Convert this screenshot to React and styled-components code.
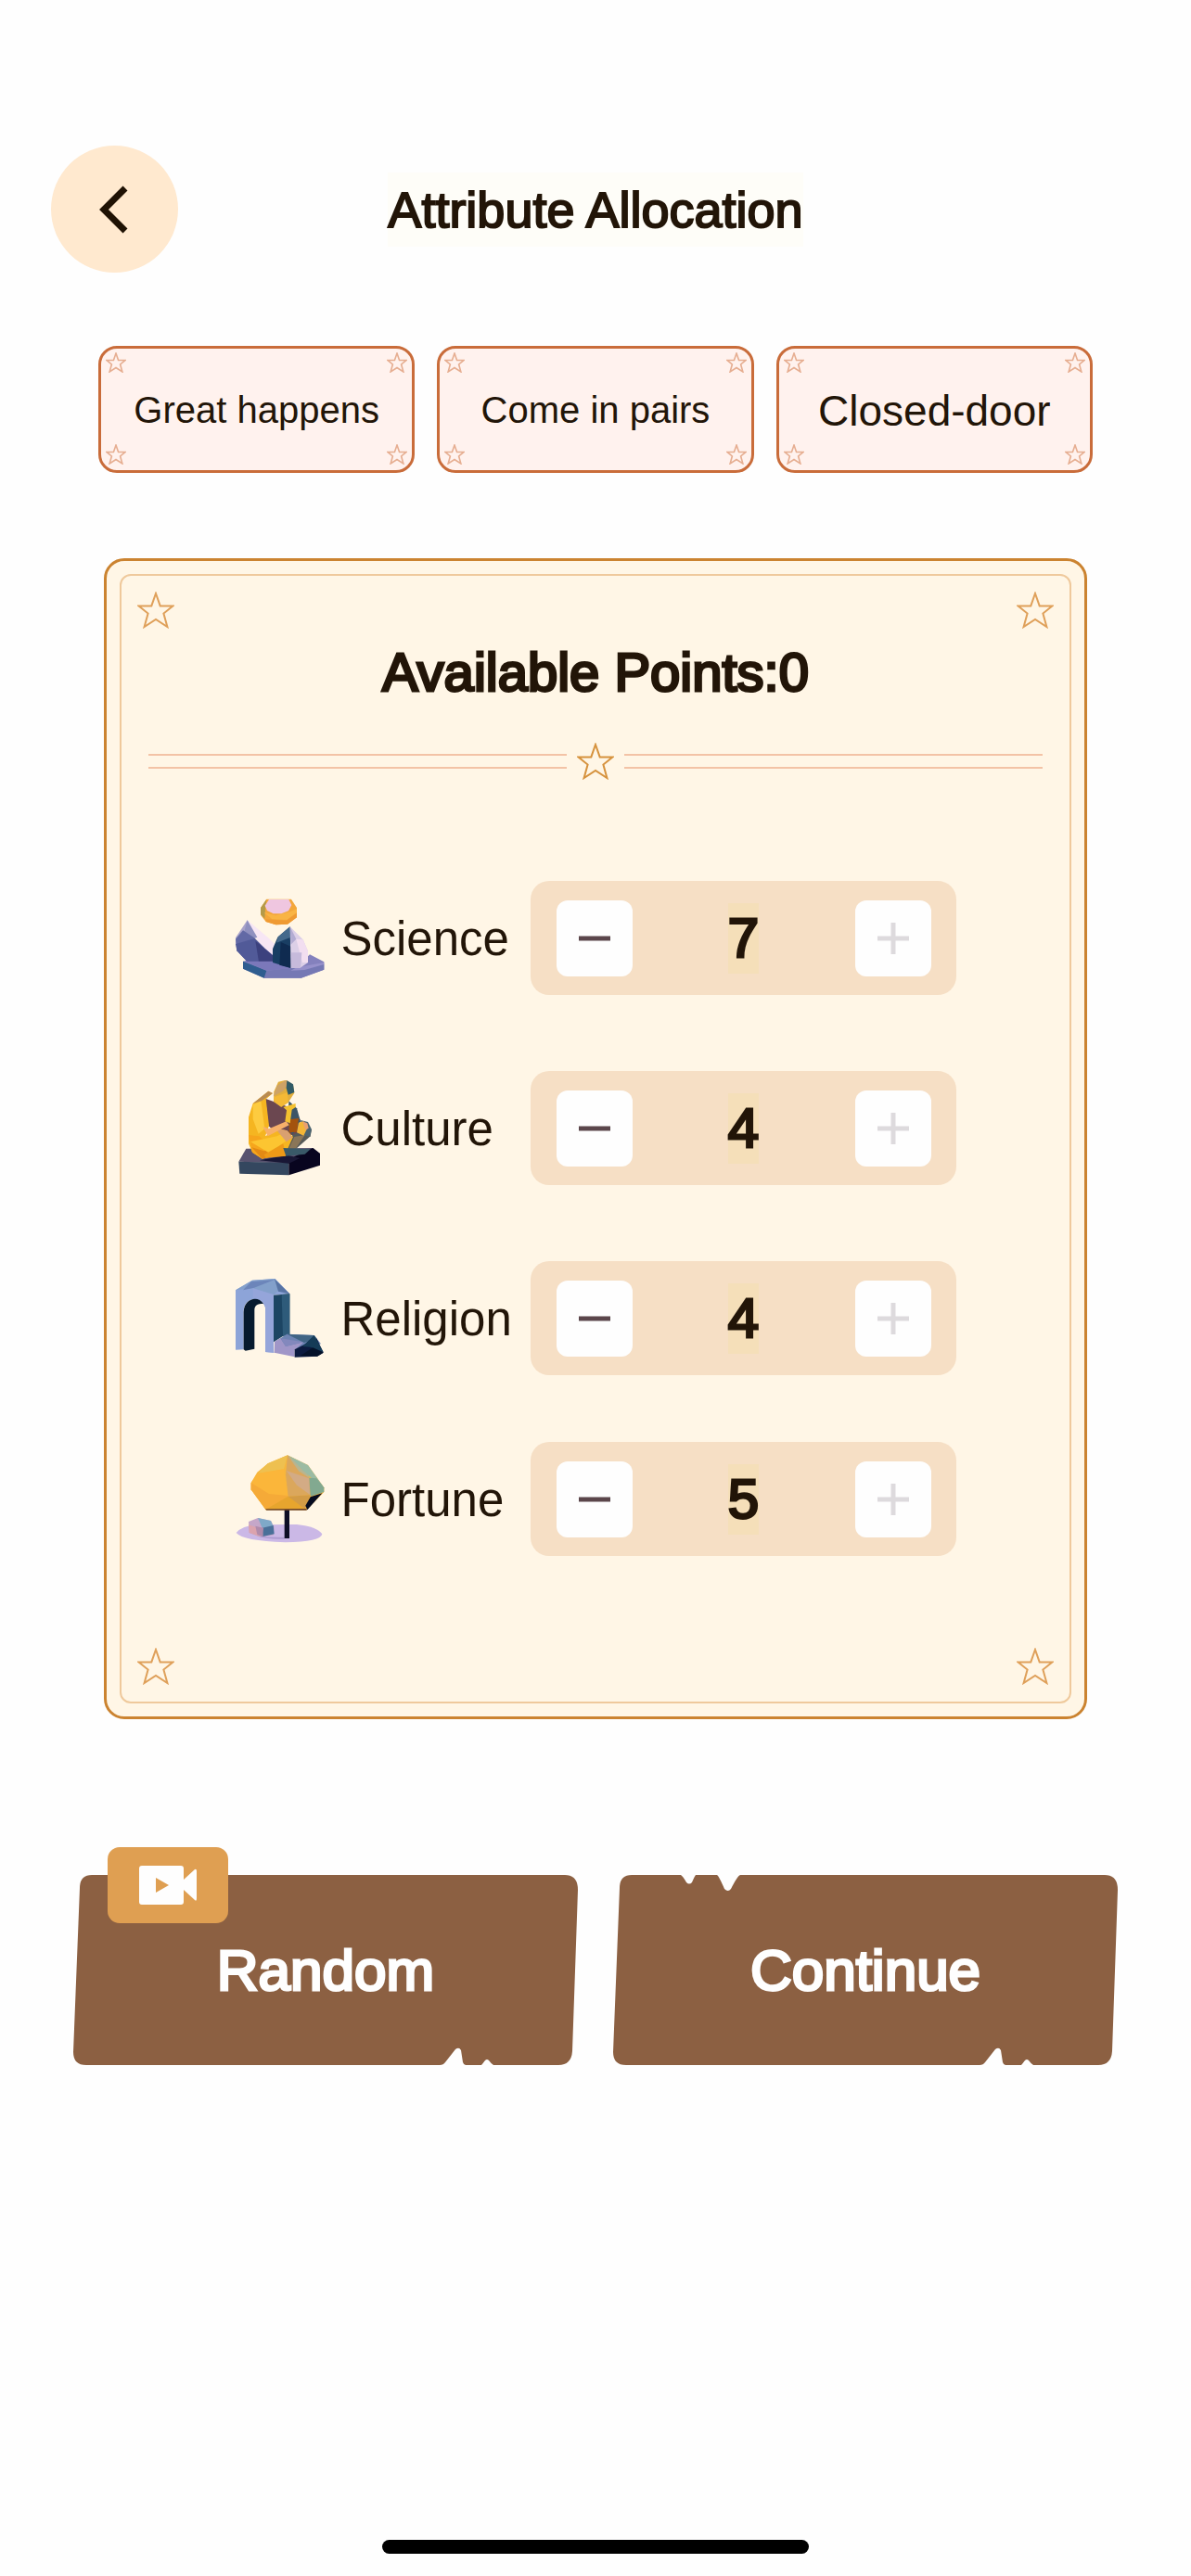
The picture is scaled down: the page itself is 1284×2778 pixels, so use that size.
import React, { useState } from "react";
import styled, { createGlobalStyle } from "styled-components";

const GlobalStyle = createGlobalStyle`
  *, *::before, *::after { box-sizing: border-box; }
  body {
    margin: 0;
    background: #fefefe;
    color: #221508;
    font-family: "Liberation Sans", Arial, Helvetica, sans-serif;
  }
  button { font: inherit; color: inherit; border: 0; padding: 0; cursor: pointer; }
  button:disabled { cursor: default; }
`;

const Page = styled.main`
  min-height: 100vh;
  display: flex;
  flex-direction: column;
  padding: 157px 0 24px;
`;

const Header = styled.header`
  display: grid;
  grid-template-columns: 1fr auto 1fr;
  align-items: center;
  padding: 0 55px;
`;

const BackButton = styled.button`
  width: 137px;
  height: 137px;
  display: grid;
  place-items: center;
  border-radius: 50%;
  background: #ffe9cf;
`;

const Title = styled.h1`
  margin: 0;
  background: #fefdf8;
  font-size: 54px;
  line-height: 80px;
  font-weight: 400;
  -webkit-text-stroke: 2px currentColor;
`;

const Tags = styled.ul`
  display: grid;
  grid-template-columns: repeat(3, 1fr);
  gap: 24px;
  margin: 79px 0 0;
  padding: 0 106px;
  list-style: none;
`;

const Tag = styled.li`
  position: relative;
  height: 137px;
  display: grid;
  place-items: center;
  padding-top: 2px;
  border: 3px solid #c96c3a;
  border-radius: 20px;
  background: #fff2ee;
  font-size: ${(p) => (p.$large ? 46 : 40)}px;
  white-space: nowrap;
`;

const CornerStar = styled.svg`
  position: absolute;
  width: ${(p) => p.$size}px;
  height: ${(p) => p.$size}px;
  ${(p) => p.$v}: ${(p) => p.$insetY}px;
  ${(p) => p.$h}: ${(p) => p.$insetX}px;
`;

const Panel = styled.section`
  position: relative;
  margin: 92px 112px 0;
  padding: 84px 0 173px;
  border: 3px solid #cb8330;
  border-radius: 22px;
  background: #fff6e6;

  &::before {
    content: "";
    position: absolute;
    inset: 14px;
    border: 2px solid #efc99c;
    border-radius: 12px;
    pointer-events: none;
  }
`;

const PointsHeading = styled.h2`
  margin: 0;
  text-align: center;
  font-size: 58px;
  line-height: 72px;
  font-weight: 400;
  -webkit-text-stroke: 3px currentColor;
`;

const Divider = styled.div`
  display: flex;
  align-items: center;
  gap: 11px;
  margin-top: 40px;
  padding: 0 45px;
`;

const DoubleLine = styled.span`
  flex: 1;
  height: 16px;
  border: solid #f3c3a6;
  border-width: 2px 0;
`;

const DividerStar = styled.svg`
  width: 40px;
  height: 40px;
`;

const Attributes = styled.ul`
  margin: 109px 0 0;
  padding: 0;
  list-style: none;
`;

const AttributeRow = styled.li`
  display: flex;
  align-items: center;
  justify-content: center;

  & + & { margin-top: 82px; }
  & + &:last-child { margin-top: 72px; }
`;

const Art = styled.svg`
  width: 96px;
  height: 104px;
`;

const AttributeName = styled.span`
  width: 222px;
  padding: 2px 0 0 18px;
  font-size: 51px;
  line-height: 60px;
`;

const Stepper = styled.div`
  width: 459px;
  height: 123px;
  display: flex;
  align-items: center;
  justify-content: space-between;
  padding: 0 27px 0 28px;
  border-radius: 20px;
  background: #f6dfc5;
`;

const StepButton = styled.button`
  width: 82px;
  height: 82px;
  display: grid;
  place-items: center;
  border-radius: 12px;
  background: #fefefe;
  color: #5b464b;

  &:disabled { color: #dddadd; }
`;

const Value = styled.output`
  background: #f5dfb9;
  font-size: 60px;
  line-height: 76px;
  -webkit-text-stroke: 3px currentColor;
`;

const Actions = styled.div`
  display: grid;
  grid-template-columns: 1fr 1fr;
  gap: 38px;
  margin-top: 168px;
  padding: 0 79px;
`;

const ActionButton = styled.button`
  position: relative;
  height: 205px;
  background: none;
  color: #fefefe;
  font-size: 62px;
  -webkit-text-stroke: 3px currentColor;
`;

const Plate = styled.svg`
  position: absolute;
  inset: 0;
  width: 100%;
  height: 100%;
`;

const ActionLabel = styled.span`
  position: relative;
`;

const AdBadge = styled.span`
  position: absolute;
  top: -30px;
  left: 37px;
  width: 130px;
  height: 82px;
  display: grid;
  place-items: center;
  border-radius: 13px;
  background: #df9f52;
`;

const HomeIndicator = styled.div`
  width: 460px;
  height: 15px;
  margin: auto auto 0;
  border-radius: 8px;
  background: #000;
`;

const STAR = "M20 2 L24.7 15.4 H38.4 L28.4 23.6 L32.4 38 L20 30 L7.6 38 L11.6 23.6 L1.6 15.4 H15.3 Z";

function StarPath({ color, width }) {
  return <path d={STAR} fill="none" stroke={color} strokeWidth={width} />;
}

function CornerStars({ size, x, top, bottom, color, width }) {
  return [["top", top], ["bottom", bottom]].flatMap(([v, y]) =>
    ["left", "right"].map((h) => (
      <CornerStar key={v + h} viewBox="0 0 40 40" aria-hidden="true" $size={size} $v={v} $h={h} $insetX={x} $insetY={y}>
        <StarPath color={color} width={width} />
      </CornerStar>
    ))
  );
}

function ScienceArt() {
  return (
    <Art viewBox="42 88 288 312" aria-hidden="true">
      <path fill="#8481bd" d="M66 318 L160 296 L262 316 L282 296 L328 320 V345 L254 372 H134 L66 342Z" />
      <path fill="#7578b4" d="M134 350 L328 328 V345 L254 372 H134Z" />
      <path fill="#9791cb" d="M240 338 L328 322 V328 L265 346 L220 348Z" />
      <path fill="#2f5d8f" d="M66 318 L142 348 L134 372 L66 342Z" />
      <path fill="#f7e6f4" d="M80 185 L150 244 L168 262 V300 H146 L100 230Z" />
      <path fill="#a8a2c9" d="M80 185 L95 236 L42 266 V242Z" />
      <path fill="#8f90bf" d="M80 185 L112 240 L88 250 L70 222Z" />
      <path fill="#6269a5" d="M42 246 L66 218 L100 240 L130 270 L162 298 L158 322 H82 L46 284Z" />
      <path fill="#515a98" d="M46 284 L42 262 L104 244 L134 274 L120 322 H82Z" />
      <path fill="#3c417e" d="M106 252 L164 300 L162 326 H118Z" />
      <path fill="#7b78ba" d="M72 318 H166 L220 340 L142 348Z" />
      <path fill="#193e63" d="M218 206 L221 340 L162 322 V278 L178 240Z" />
      <path fill="#44698b" d="M218 206 L221 240 L174 258 L180 238Z" />
      <path fill="#0f2b50" d="M188 256 L221 270 V340 L184 330Z" />
      <path fill="#dccfe7" d="M218 206 L260 248 L276 285 V322 L250 340 H221Z" />
      <path fill="#b3acd2" d="M218 206 L238 246 L221 264Z" />
      <path fill="#f2def0" d="M238 246 L260 248 L276 285 V322 H258Z" />
      <path fill="#c6badb" d="M221 290 H256 L252 340 H221Z" />
      <path fill="#f3a63a" d="M142 117 H222 L240 145 V176 L210 198 L172 200 L140 190 L123 168 V145Z" />
      <path fill="#b49a48" d="M142 117 L123 145 V166 L136 180 L138 150Z" />
      <path fill="#f9b444" d="M134 160 L172 170 L222 156 L240 148 V160 L208 184 L160 182Z" />
      <path fill="#ef9a33" d="M140 182 L206 186 L240 162 V176 L210 198 L172 200 L140 190Z" />
      <path fill="#efc6e0" d="M150 118 H214 L223 136 L213 155 L190 164 H164 L144 154 L137 138Z" />
    </Art>
  );
}

function CultureArt() {
  return (
    <Art viewBox="42 703 288 312" aria-hidden="true">
      <path fill="#59536f" d="M76 924 L292 922 L315 940 L214 972 L52 966Z" />
      <path fill="#34475f" d="M52 966 L214 970 V1010 L55 1005Z" />
      <path fill="#08051f" d="M214 968 L232 950 L292 922 L315 940 V978 L214 1010Z" />
      <path fill="#191735" d="M120 962 L210 945 L250 955 L214 972Z" />
      <path fill="#6b4750" d="M138 762 L215 790 L250 830 L245 880 L180 880 L148 850Z" />
      <path fill="#3d5667" d="M214 770 L240 794 L252 836 L226 880 L212 850Z" />
      <path fill="#a3530e" d="M214 830 L246 826 L240 870 L215 872Z" />
      <path fill="#565a58" d="M226 880 L262 862 L288 862 L284 884 L238 924 L204 926Z" />
      <path fill="#4c6470" d="M252 832 L276 838 L288 862 L282 886 L262 880Z" />
      <path fill="#8a7658" d="M232 886 L266 880 L238 922 L214 924Z" />
      <path fill="#f3b637" d="M246 840 L262 836 L273 860 L262 882 L240 872Z" />
      <path fill="#e9a071" d="M258 836 L274 842 L278 858 L268 864Z" />
      <path fill="#f5b521" d="M148 738 L162 745 L140 764 L150 850 L138 884 L182 860 L208 866 L228 886 L200 948 L160 950 L128 957 L96 936 L84 908 V822 L98 778Z" />
      <path fill="#fdcb40" d="M98 782 L124 770 L136 860 L116 876 L98 828Z" />
      <path fill="#b98b52" d="M98 778 L148 738 L162 745 L126 770Z" />
      <path fill="#f6a51c" d="M84 880 L118 884 L150 910 L128 957 L96 936Z" />
      <path fill="#e38a14" d="M94 920 L134 932 L166 914 L184 942 L128 957Z" />
      <path fill="#fcc531" d="M90 902 L176 884 L206 868 L216 892 L150 938Z" />
      <path fill="#ee9a17" d="M134 944 L196 908 L205 948 L140 954Z" />
      <path fill="#d9a070" d="M176 866 L182 860 L209 866 L226 888 L206 902Z" />
      <path fill="#f7b06a" d="M130 852 L150 860 L206 836 L215 848 L146 884Z" />
      <path fill="#f4c12f" d="M196 790 L236 778 V790 L224 798 L218 842 L202 836 L207 800Z" />
      <path fill="#e2ae3c" d="M166 740 L180 708 L206 702 L228 718 L232 744 L212 775 L190 790 L165 772Z" />
      <path fill="#cda266" d="M176 720 L205 702 L216 714 L195 738 L164 755Z" />
      <path fill="#315b66" d="M208 704 L228 716 L232 742 L212 750 L206 728Z" />
      <path fill="#f4b935" d="M166 758 L210 742 L212 775 L188 788 L166 772Z" />
      <path fill="#395968" d="M196 922 L284 926 L266 942 L205 948Z" />
    </Art>
  );
}

function ReligionArt() {
  return (
    <Art viewBox="42 120 288 312" aria-hidden="true">
      <path fill="#8da4d8" d="M42 184 L96 152 L170 147 L217 196 L165 200 V386 L138 384 V240 C132 205 72 200 68 250 V376 L42 377Z" />
      <path fill="#83a0cb" d="M96 152 L170 147 L182 184 L164 200 L98 178 L42 184Z" />
      <path fill="#6c85ba" d="M92 157 L168 150 L102 176 L66 184Z" />
      <path fill="#5874a4" d="M168 148 L217 196 L180 188Z" />
      <path fill="#95a5da" d="M98 178 L165 198 V386 L138 384 V240 C132 222 116 210 98 210Z" />
      <path fill="#1c4563" d="M165 200 L217 196 V328 L196 332 L165 352Z" />
      <path fill="#2e5b7a" d="M191 198 L217 196 V328 L195 333Z" />
      <path fill="#061a2e" d="M68 376 V254 C70 210 115 200 132 228 C112 228 103 232 103 250 V374 L74 380Z" />
      <path fill="#6d83b3" d="M174 348 L208 326 L296 330 L318 358 L233 376 L167 386Z" />
      <path fill="#a096c8" d="M168 350 L187 340 L204 366 L262 352 L233 378 V400 L167 386Z" />
      <path fill="#8388bd" d="M188 340 L262 352 L204 366Z" />
      <path fill="#416585" d="M208 326 L296 330 L304 340 L264 354Z" />
      <path fill="#0b1a3f" d="M233 376 L304 340 L326 386 L306 398 L233 401Z" />
      <path fill="#153b57" d="M296 330 L326 384 L284 368 L258 366Z" />
      <path fill="#041129" d="M252 396 L292 370 L326 386 L306 398Z" />
    </Art>
  );
}

function FortuneArt() {
  return (
    <Art viewBox="42 702 288 312" aria-hidden="true">
      <path fill="#cbb8e6" d="M44 966 Q62 944 112 940 L240 939 Q306 946 322 970 Q318 996 202 997 Q66 992 44 966Z" />
      <path fill="#ae9bd0" d="M110 976 Q160 982 200 980 V986 Q140 988 110 976Z" />
      <path fill="#c5a7c9" d="M84 930 L114 918 L156 927 L167 948 L164 974 L118 979 L86 966Z" />
      <path fill="#dba3ae" d="M84 940 L116 950 L120 978 L86 966Z" />
      <path fill="#7fa9c8" d="M114 918 L156 927 L164 946 L128 950Z" />
      <path fill="#4a7099" d="M128 950 L164 942 L167 970 L130 978Z" />
      <path fill="#b08bab" d="M106 944 L132 950 L130 979 L112 972Z" />
      <path fill="#0e0e25" d="M200 888 H216 V984 H200Z" />
      <path fill="#f7b63c" d="M210 715 L276 747 L328 820 V834 L272 892 L140 892 L92 826 V804 L112 770 L146 742Z" />
      <path fill="#eec050" d="M210 715 L198 760 L114 774 L146 742Z" />
      <path fill="#fbb63a" d="M114 774 L198 760 L212 846 L140 892 L92 826 V804Z" />
      <path fill="#f5aa38" d="M92 804 L150 840 L212 846 L190 880 L140 892 L92 826Z" />
      <path fill="#dba75c" d="M210 715 L280 786 L284 844 L212 848 L204 778Z" />
      <path fill="#d3ab85" d="M206 765 L280 790 L282 842 L240 812Z" />
      <path fill="#b9b48f" d="M210 715 L246 766 L282 790 L260 750Z" />
      <path fill="#9bbba3" d="M216 718 L276 747 L328 820 L300 800 L260 765Z" />
      <path fill="#82a990" d="M280 788 L304 790 L328 820 V834 L284 848Z" />
      <path fill="#d29b46" d="M212 848 L284 844 L266 890 L190 890Z" />
      <path fill="#e7a52e" d="M140 890 L212 848 L254 880 L272 892Z" />
      <path fill="#060b20" d="M284 850 L322 838 L274 892 L268 878Z" />
      <path fill="#6e4527" d="M138 889 L272 888 V893 H142Z" />
    </Art>
  );
}

const ATTRIBUTES = [
  { name: "Science", start: 7, ArtIcon: ScienceArt },
  { name: "Culture", start: 4, ArtIcon: CultureArt },
  { name: "Religion", start: 4, ArtIcon: ReligionArt },
  { name: "Fortune", start: 5, ArtIcon: FortuneArt },
];

const NOTCHES_TOP = "H73 Q75 1 79 8 Q82 11 85 8 Q88 1 89 0 H112 Q114 1 120 15 Q124 19 127 15 Q134 1 137 0";
const NOTCHES_BOTTOM =
  "H453 Q451 204 448 200 Q446 198 444 200 Q441 204 440 205 H423 Q421 205 420 202 L418 189 Q416 185 412 188 L401 202 Q399 205 395 205";

function ButtonPlate({ tornTop }) {
  return (
    <Plate viewBox="0 0 544 205" preserveAspectRatio="none" aria-hidden="true">
      <path
        fill="#8c6042"
        d={`M20 0 ${tornTop ? NOTCHES_TOP : ""} H530 Q544 0 544 16 L538 190 Q537 205 523 205 ${NOTCHES_BOTTOM} H14 Q0 205 0 191 L7 14 Q7 0 20 0Z`}
      />
    </Plate>
  );
}

export default function App() {
  const [values, setValues] = useState(ATTRIBUTES.map((a) => a.start));
  const [points, setPoints] = useState(0);

  const change = (index, delta) => {
    setValues(values.map((v, i) => (i === index ? v + delta : v)));
    setPoints(points - delta);
  };

  return (
    <Page>
      <GlobalStyle />
      <Header>
        <BackButton type="button" aria-label="Back">
          <svg width="40" height="56" viewBox="0 0 40 56" fill="none" stroke="#1f1204" strokeWidth="7">
            <path d="M31 5 L8 28 L31 51" />
          </svg>
        </BackButton>
        <Title>Attribute Allocation</Title>
      </Header>

      <Tags>
        {["Great happens", "Come in pairs", "Closed-door"].map((text) => (
          <Tag key={text} $large={text.length < 12}>
            <CornerStars size={22} x={5} top={4} bottom={6} color="#e6ae91" width={3} />
            {text}
          </Tag>
        ))}
      </Tags>

      <Panel>
        <CornerStars size={40} x={33} top={33} bottom={34} color="#dfa05a" width={2} />
        <PointsHeading>Available Points:{points}</PointsHeading>
        <Divider>
          <DoubleLine />
          <DividerStar viewBox="0 0 40 40" aria-hidden="true">
            <StarPath color="#d6923d" width={2} />
          </DividerStar>
          <DoubleLine />
        </Divider>
        <Attributes>
          {ATTRIBUTES.map(({ name, ArtIcon }, i) => (
            <AttributeRow key={name}>
              <ArtIcon />
              <AttributeName>{name}</AttributeName>
              <Stepper role="group" aria-label={name}>
                <StepButton
                  type="button"
                  aria-label={`Decrease ${name}`}
                  disabled={values[i] === 0}
                  onClick={() => change(i, -1)}
                >
                  <svg width="34" height="34" viewBox="0 0 34 34" stroke="currentColor" strokeWidth="5">
                    <path d="M0 17 H34" />
                  </svg>
                </StepButton>
                <Value>{values[i]}</Value>
                <StepButton
                  type="button"
                  aria-label={`Increase ${name}`}
                  disabled={points === 0}
                  onClick={() => change(i, 1)}
                >
                  <svg width="34" height="34" viewBox="0 0 34 34" stroke="currentColor" strokeWidth="5">
                    <path d="M0 17 H34 M17 0 V34" />
                  </svg>
                </StepButton>
              </Stepper>
            </AttributeRow>
          ))}
        </Attributes>
      </Panel>

      <Actions>
        <ActionButton type="button">
          <ButtonPlate />
          <ActionLabel>Random</ActionLabel>
          <AdBadge>
            <svg width="62" height="42" viewBox="0 0 62 42" aria-hidden="true">
              <path
                fill="#fefefe"
                d="M3 0 H45 Q48 0 48 3 V15 L60 4 Q62 3 62 6 V35 Q62 39 60 37 L48 26 V39 Q48 42 45 42 H3 Q0 42 0 39 V3 Q0 0 3 0Z"
              />
              <path fill="#df9f52" d="M18 13 L32 21 L18 29Z" />
            </svg>
          </AdBadge>
        </ActionButton>
        <ActionButton type="button">
          <ButtonPlate tornTop />
          <ActionLabel>Continue</ActionLabel>
        </ActionButton>
      </Actions>

      <HomeIndicator />
    </Page>
  );
}
